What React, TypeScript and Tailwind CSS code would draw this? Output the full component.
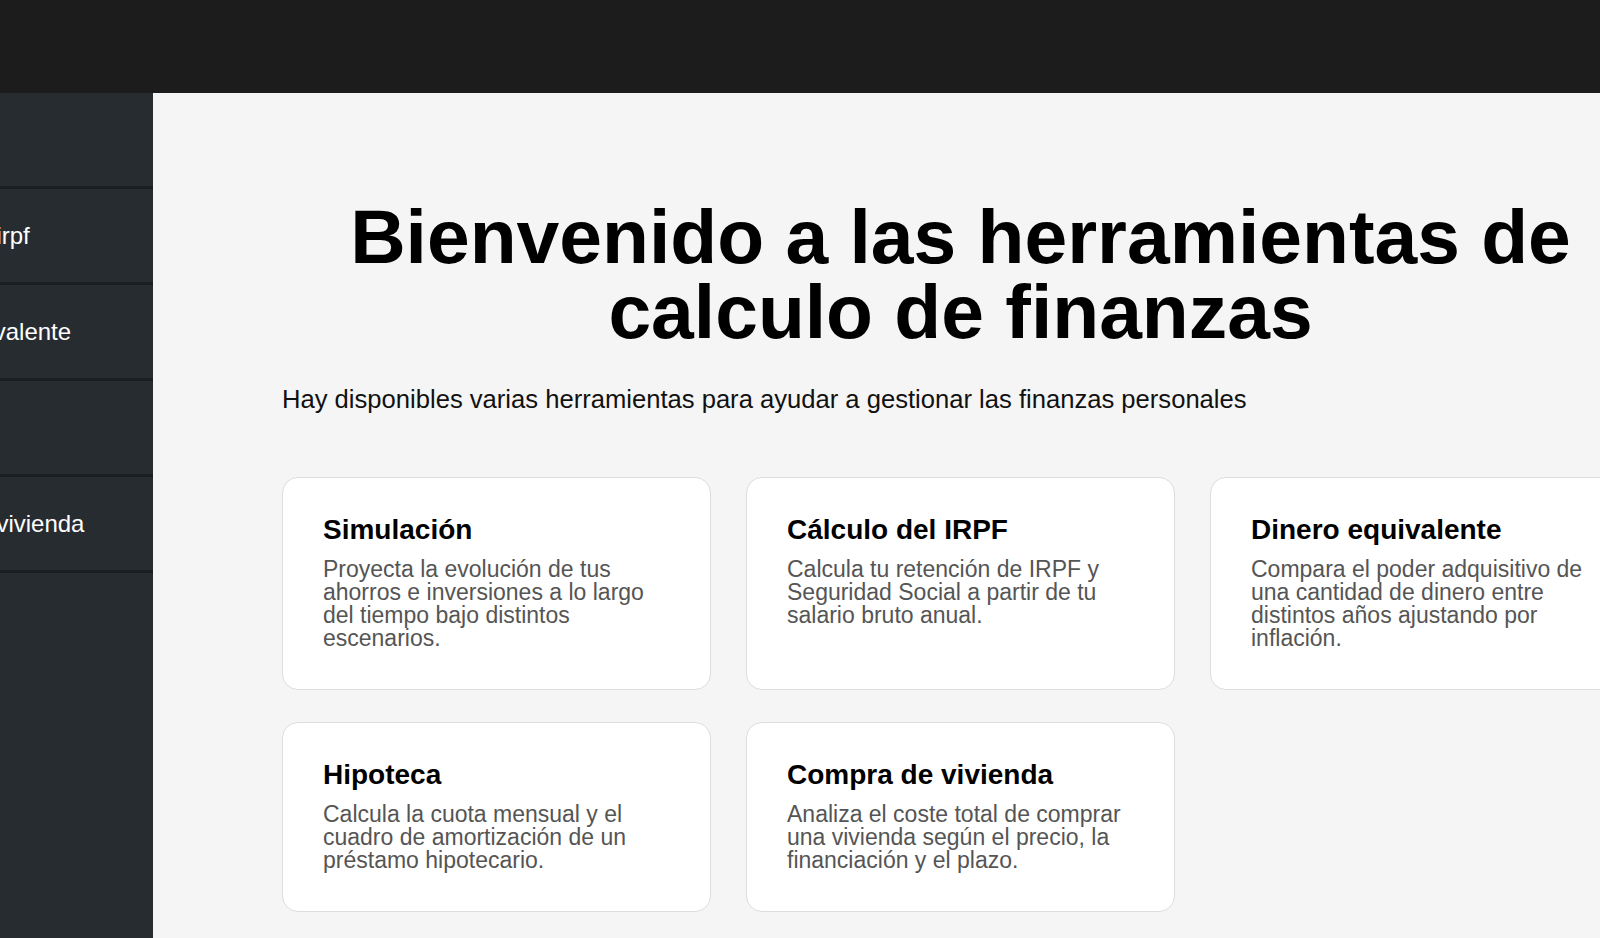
const tools = [
  {
    title: "Simulación",
    text: "Proyecta la evolución de tus ahorros e inversiones a lo largo del tiempo bajo distintos escenarios.",
  },
  {
    title: "Cálculo del IRPF",
    text: "Calcula tu retención de IRPF y Seguridad Social a partir de tu salario bruto anual.",
  },
  {
    title: "Dinero equivalente",
    text: "Compara el poder adquisitivo de una cantidad de dinero entre distintos años ajustando por inflación.",
  },
  {
    title: "Hipoteca",
    text: "Calcula la cuota mensual y el cuadro de amortización de un préstamo hipotecario.",
  },
  {
    title: "Compra de vivienda",
    text: "Analiza el coste total de comprar una vivienda según el precio, la financiación y el plazo.",
  },
];

const navItems = [
  "Simulación",
  "Cálculo del irpf",
  "Dinero equivalente",
  "Hipoteca",
  "Compra de vivienda",
];

export default function App() {
  return (
    <div className="flex h-screen flex-col overflow-hidden bg-[#f5f5f5] font-['Liberation_Sans',Arial,sans-serif]">
      <header className="h-[93px] shrink-0 bg-[#1c1c1c]" />
      <div className="flex min-h-0 flex-1">
        <aside className="w-[153px] shrink-0 overflow-hidden bg-[#272c30]">
          <nav className="-ml-[153px] w-[306px]">
            {navItems.map((item) => (
              <a
                key={item}
                href="#"
                className="flex h-[96px] items-center whitespace-nowrap border-b-[3px] border-[#1c1f21] px-6 text-[24px] text-white"
              >
                {item}
              </a>
            ))}
          </nav>
        </aside>
        <main className="min-w-0 flex-1 overflow-hidden">
          <div className="w-[1486px] pl-[129px] pt-[106px]">
            <h1 className="text-center text-[76.8px] font-bold leading-[75px] text-black">
              Bienvenido a las herramientas de
              <br />
              calculo de finanzas
            </h1>
            <p className="mt-[32px] text-[25.6px] leading-[36px] text-[#111]">
              Hay disponibles varias herramientas para ayudar a gestionar las finanzas personales
            </p>
            <div className="mt-[60px] grid grid-cols-3 gap-x-[35px] gap-y-[32px]">
              {tools.map((tool) => (
                <a
                  key={tool.title}
                  href="#"
                  className="rounded-2xl border border-[#dddddd] bg-white px-10 pt-10 pb-[39px]"
                >
                  <h2 className="text-[28px] font-bold leading-[24px] text-black">
                    {tool.title}
                  </h2>
                  <p className="mt-4 text-[23px] leading-[23px] text-[#555]">
                    {tool.text}
                  </p>
                </a>
              ))}
            </div>
          </div>
        </main>
      </div>
    </div>
  );
}
